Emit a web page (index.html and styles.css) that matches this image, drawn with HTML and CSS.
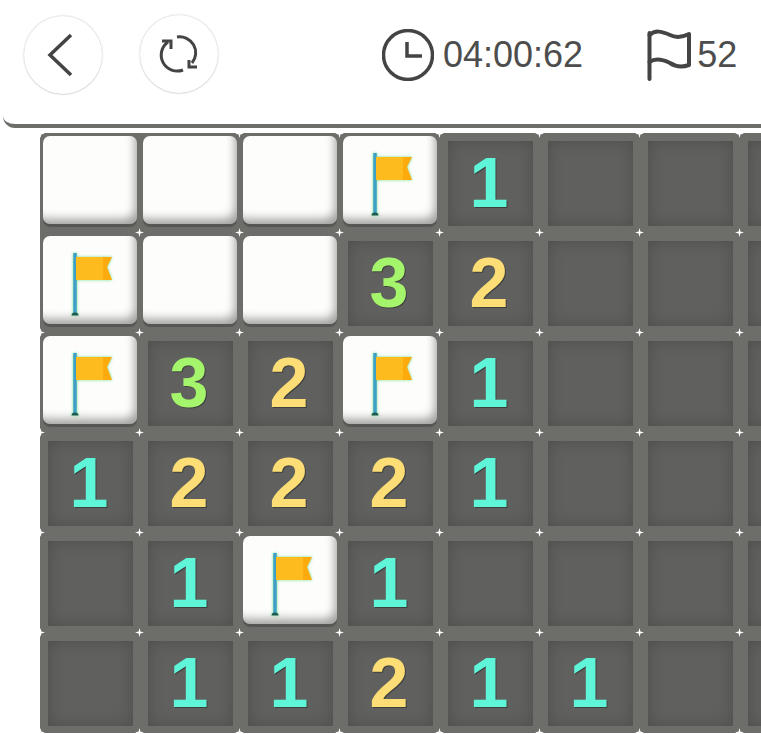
FILE: index.html
```html
<!DOCTYPE html>
<html lang="en">
<head>
    <meta charset="UTF-8">
    <meta name="viewport" content="width=device-width, initial-scale=1.0">
    <title>Minesweeper</title>
    <link rel="stylesheet" href="styles.css">
</head>
<body>
    <svg class="defs" width="0" height="0">
        <symbol id="tile-flag" viewBox="0 0 94 88">
            <path class="flag-pole" d="M32 17V79"/>
            <path class="flag-foot" d="M28.5 79.5a3.5 3 0 0 1 7 0z"/>
            <path class="flag-back" d="M52 21H69L64 31L69 44H52z"/>
            <path class="flag-front" d="M33 21H60V44H33z"/>
        </symbol>
    </svg>

    <header class="topbar">
        <button class="round-btn">
            <svg width="78" height="78" viewBox="0 0 78 78"><path class="line" d="M47 19L26 39L47 59"/></svg>
        </button>
        <button class="round-btn refresh">
            <svg width="78" height="78" viewBox="0 0 78 78">
                <path class="line thin" d="M37 22A16 16 0 0 1 52 48"/>
                <path class="line thin" d="M49 45V52H57"/>
                <path class="line thin" d="M43 55A16 16 0 0 1 28 27"/>
                <path class="line thin" d="M22 26H31V34"/>
            </svg>
        </button>
        <div class="stat timer">
            <svg width="52" height="52" viewBox="0 0 52 52">
                <circle class="line" cx="26" cy="26" r="24.5"/>
                <path class="line" d="M25 13V27H40"/>
            </svg>
            <span>04:00:62</span>
        </div>
        <div class="stat flags">
            <svg width="46" height="52" viewBox="0 0 46 52">
                <path class="line round" d="M4.5 4V50"/>
                <path class="line round" d="M4.5 6C10 1 16 2 25 6C31 9 38 8 44 5V36C38 38 31 38 25 34C17 30 10 29 4.5 33"/>
            </svg>
            <span>52</span>
        </div>
    </header>

    <main class="board">
        <!-- row 1 -->
        <div class="cell"><div class="tile closed"></div></div>
        <div class="cell"><div class="tile closed"></div></div>
        <div class="cell"><div class="tile closed"></div></div>
        <div class="cell"><div class="tile closed"><svg class="flag"><use href="#tile-flag"/></svg></div></div>
        <div class="cell"><div class="tile open n1">1</div></div>
        <div class="cell"><div class="tile open"></div></div>
        <div class="cell"><div class="tile open"></div></div>
        <div class="cell"><div class="tile open"></div></div>
        <!-- row 2 -->
        <div class="cell"><div class="tile closed"><svg class="flag"><use href="#tile-flag"/></svg></div></div>
        <div class="cell"><div class="tile closed"></div></div>
        <div class="cell"><div class="tile closed"></div></div>
        <div class="cell"><div class="tile open n3">3</div></div>
        <div class="cell"><div class="tile open n2">2</div></div>
        <div class="cell"><div class="tile open"></div></div>
        <div class="cell"><div class="tile open"></div></div>
        <div class="cell"><div class="tile open"></div></div>
        <!-- row 3 -->
        <div class="cell"><div class="tile closed"><svg class="flag"><use href="#tile-flag"/></svg></div></div>
        <div class="cell"><div class="tile open n3">3</div></div>
        <div class="cell"><div class="tile open n2">2</div></div>
        <div class="cell"><div class="tile closed"><svg class="flag"><use href="#tile-flag"/></svg></div></div>
        <div class="cell"><div class="tile open n1">1</div></div>
        <div class="cell"><div class="tile open"></div></div>
        <div class="cell"><div class="tile open"></div></div>
        <div class="cell"><div class="tile open"></div></div>
        <!-- row 4 -->
        <div class="cell"><div class="tile open n1">1</div></div>
        <div class="cell"><div class="tile open n2">2</div></div>
        <div class="cell"><div class="tile open n2">2</div></div>
        <div class="cell"><div class="tile open n2">2</div></div>
        <div class="cell"><div class="tile open n1">1</div></div>
        <div class="cell"><div class="tile open"></div></div>
        <div class="cell"><div class="tile open"></div></div>
        <div class="cell"><div class="tile open"></div></div>
        <!-- row 5 -->
        <div class="cell"><div class="tile open"></div></div>
        <div class="cell"><div class="tile open n1">1</div></div>
        <div class="cell"><div class="tile closed"><svg class="flag"><use href="#tile-flag"/></svg></div></div>
        <div class="cell"><div class="tile open n1">1</div></div>
        <div class="cell"><div class="tile open"></div></div>
        <div class="cell"><div class="tile open"></div></div>
        <div class="cell"><div class="tile open"></div></div>
        <div class="cell"><div class="tile open"></div></div>
        <!-- row 6 -->
        <div class="cell"><div class="tile open"></div></div>
        <div class="cell"><div class="tile open n1">1</div></div>
        <div class="cell"><div class="tile open n1">1</div></div>
        <div class="cell"><div class="tile open n2">2</div></div>
        <div class="cell"><div class="tile open n1">1</div></div>
        <div class="cell"><div class="tile open n1">1</div></div>
        <div class="cell"><div class="tile open"></div></div>
        <div class="cell"><div class="tile open"></div></div>
    </main>
</body>
</html>
```

FILE: styles.css
```css
html, body {
    margin: 0;
    height: 734px;
    overflow: hidden;
    background: #fff;
}
.defs {
    display: block;
    height: 0;
}
.topbar {
    display: flex;
    align-items: center;
    box-sizing: content-box;
    height: 110px;
    margin-left: 3px;
    padding: 0 0 14px 21px;
    background: #fff;
    border-bottom: 4px solid #6d6e6a;
    border-bottom-left-radius: 12px;
}
.round-btn {
    width: 78px;
    height: 78px;
    padding: 0;
    flex: none;
    background: #fff;
    border: 0;
    border-radius: 50%;
    box-shadow: 0 0 2px rgba(0, 0, 0, 0.28), 0 1px 1px rgba(0, 0, 0, 0.06);
}
.round-btn svg {
    display: block;
}
.refresh {
    margin: 0 0 2px 38px;
}
.line {
    fill: none;
    stroke: #444;
    stroke-width: 3.5;
}
.thin {
    stroke-width: 3;
}
.round {
    stroke-linecap: round;
    stroke-linejoin: round;
    stroke-width: 4;
}
.stat {
    display: flex;
    align-items: center;
    font-family: "Liberation Sans", sans-serif;
    font-size: 36px;
    color: #4d4d4d;
}
.timer {
    margin-left: 164px;
    gap: 9px;
}
.flags {
    margin-left: 62px;
    gap: 6px;
}
.board {
    display: grid;
    grid-template-columns: repeat(8, 100px);
    grid-auto-rows: 100px;
    width: 800px;
    margin: 5px 0 0 40px;
    background: #6d6e6a;
    border-top-left-radius: 4px;
}
.cell {
    position: relative;
    display: flex;
}
/* little sparkles where the grid lines cross */
.cell::after,
.cell:nth-child(-n+8)::before,
.cell:nth-child(8n+1)::before {
    content: "";
    position: absolute;
    z-index: 1;
    width: 9px;
    height: 9px;
    background: #fff;
    clip-path: polygon(50% 0, 60% 40%, 100% 50%, 60% 60%, 50% 100%, 40% 60%, 0 50%, 40% 40%);
}
.cell::after {
    right: -4px;
    bottom: -4px;
}
.cell:nth-child(-n+8)::before {
    right: -4px;
    top: -4px;
}
.cell:nth-child(8n+1)::before {
    left: -4px;
    bottom: -4px;
}
.tile {
    flex: 1;
    display: flex;
    align-items: center;
    justify-content: center;
}
.closed {
    margin: 3px 3px 9px;
    background: #fdfdfb;
    border-radius: 7px;
    box-shadow: inset -6px -9px 10px -4px rgba(0, 0, 0, 0.36), 0 3px 0 #565754;
}
.open {
    margin: 8px 7px 7px 8px;
    padding: 0 3px 2px 0;
    background: #60615e;
    box-shadow: inset 0 0 16px rgba(0, 0, 0, 0.2);
    font-family: "Liberation Sans", sans-serif;
    font-size: 70px;
    font-weight: bold;
    line-height: 1;
    text-shadow: 1px 1px 0 rgba(0, 0, 0, 0.35);
}
.n1 { color: #5ef5d8; }
.n2 { color: #fddd75; }
.n3 { color: #a4f56c; }
.flag {
    width: 94px;
    height: 88px;
    filter: drop-shadow(0 0 1.5px #6fe08c);
}
.flag-pole {
    stroke: #3f9fc4;
    stroke-width: 3.5;
}
.flag-foot { fill: #1f5a50; }
.flag-back { fill: #fdab0c; }
.flag-front { fill: #fdbb1d; }
```
